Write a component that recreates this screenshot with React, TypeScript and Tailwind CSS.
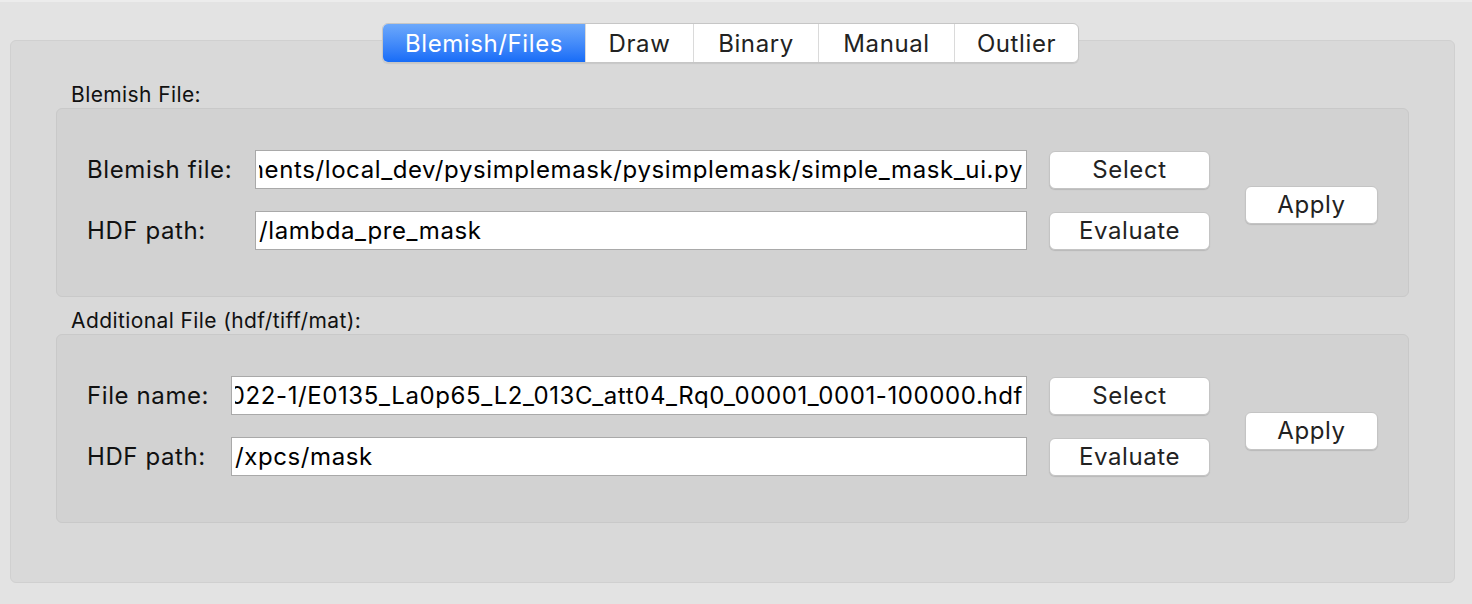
import React from 'react';

const tabs = [
  { label: 'Blemish/Files', w: 'w-[202px]' },
  { label: 'Draw', w: 'w-[108px]' },
  { label: 'Binary', w: 'w-[125px]' },
  { label: 'Manual', w: 'w-[136px]' },
  { label: 'Outlier', w: 'w-[124px]' },
];

function Button({ text }: { text: string }) {
  return (
    <button
      type="button"
      className="h-[38px] w-full rounded-[6px] bg-white border border-[#c4c4c4] shadow-[0_1px_1px_rgba(0,0,0,0.12)] text-[24px] tracking-[0.6px] leading-none text-[#222]"
    >
      {text}
    </button>
  );
}

function PathInput({ value }: { value: string }) {
  return (
    <div className="h-[39px] bg-white border border-[#a9a9a9] flex items-center overflow-hidden px-[3px]">
      <div className="w-full flex justify-end overflow-hidden">
        <span className="whitespace-nowrap text-[24px] tracking-[0.6px] text-black leading-none">{value}</span>
      </div>
    </div>
  );
}

function ShortInput({ value }: { value: string }) {
  return (
    <div className="h-[39px] bg-white border border-[#a9a9a9] flex items-center px-[3px]">
      <span className="whitespace-nowrap text-[24px] tracking-[0.6px] text-black leading-none">{value}</span>
    </div>
  );
}

interface GroupProps {
  title: string;
  fileLabel: string;
  fileValue: string;
  hdfValue: string;
  cols: string;
  className?: string;
}

function FileGroup({ title, fileLabel, fileValue, hdfValue, cols, className = '' }: GroupProps) {
  return (
    <div className={className}>
      <div className="pl-[15px] h-[24px] leading-[24px] text-[21px] tracking-[0.4px] text-[#111]">{title}</div>
      <div className="mt-px h-[189px] rounded-[6px] bg-[#d2d2d2] border border-[#c9c9c9] pl-[30px] pt-[41px] flex items-start">
        <div className={`w-[1123px] grid ${cols} gap-x-[22px] gap-y-[22px] items-center`}>
          <span className="text-[24px] tracking-[0.6px] text-[#111] whitespace-nowrap">{fileLabel}</span>
          <PathInput value={fileValue} />
          <Button text="Select" />
          <span className="text-[24px] tracking-[0.6px] text-[#111] whitespace-nowrap">HDF path:</span>
          <ShortInput value={hdfValue} />
          <Button text="Evaluate" />
        </div>
        <div className="ml-[35px] w-[133px] mt-[36px]">
          <Button text="Apply" />
        </div>
      </div>
    </div>
  );
}

export default function App() {
  return (
    <div className="w-[1472px] h-[604px] overflow-hidden bg-[#e3e3e3] border-t-2 border-[#ececec] pt-[21px] font-['Inter',sans-serif]">
      <div className="relative z-10 flex justify-center pr-[11px]">
        <div className="flex h-[40px] rounded-[6px] border border-[#c6c6c6] bg-white overflow-hidden shadow-[0_1px_1px_rgba(0,0,0,0.08)]">
          {tabs.map((t, i) => (
            <div
              key={t.label}
              className={`${t.w} flex items-center justify-center pt-[2px] text-[24px] tracking-[0.6px] leading-none ${
                i === 0
                  ? 'bg-linear-to-b from-[#6ca8fb] to-[#166cf7] text-white'
                  : 'text-[#222] border-l border-[#dadada]'
              }`}
            >
              {t.label}
            </div>
          ))}
        </div>
      </div>
      <div className="-mt-[23px] ml-[10px] w-[1445px] h-[543px] rounded-[6px] bg-[#d9d9d9] border border-[#d0d0d0] pt-[42px] px-[45px]">
        <FileGroup
          title="Blemish File:"
          fileLabel="Blemish file:"
          fileValue="/Users/mqichu/Documents/local_dev/pysimplemask/pysimplemask/simple_mask_ui.py"
          hdfValue="/lambda_pre_mask"
          cols="grid-cols-[146px_1fr_161px]"
        />
        <FileGroup
          className="mt-[12px]"
          title="Additional File (hdf/tiff/mat):"
          fileLabel="File name:"
          fileValue="/home/8-id-i/2022-1/E0135_La0p65_L2_013C_att04_Rq0_00001_0001-100000.hdf"
          hdfValue="/xpcs/mask"
          cols="grid-cols-[122px_1fr_161px]"
        />
      </div>
    </div>
  );
}
